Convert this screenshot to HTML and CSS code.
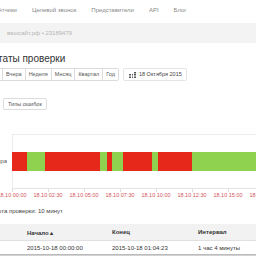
FILE: index.html
```html
<!DOCTYPE html>
<html lang="ru">
<head>
<meta charset="utf-8">
<link rel="stylesheet" href="styles.css">
</head>
<body>
<nav class="topnav">
  <a>Счётчики</a>
  <a>Целевой звонок</a>
  <a>Представители</a>
  <a>API</a>
  <a>Блог</a>
</nav>
<div class="band">вашсайт.рф • 23189479</div>
<h1 class="title">Результаты проверки</h1>
<div class="toolbar">
  <div class="group">
    <button class="btn">Сегодня</button>
    <button class="btn">Вчера</button>
    <button class="btn">Неделя</button>
    <button class="btn">Месяц</button>
    <button class="btn">Квартал</button>
    <button class="btn">Год</button>
  </div>
  <button class="btn date">
    <svg width="7" height="6" viewBox="0 0 7 6"><rect x="5" y="0" width="2" height="1.5" fill="#555"/><rect x="0" y="2" width="7" height="1.5" fill="#555"/><rect x="0" y="4.5" width="7" height="1.5" fill="#555"/><rect x="2" y="2" width="1" height="4" fill="#fff"/><rect x="4" y="2" width="1" height="4" fill="#fff"/></svg>
    18 Октября 2015
  </button>
</div>
<div class="filters">
  <button class="btn single">Типы ошибок</button>
</div>
<section class="chart">
  <div class="ylabel">Доступность сервера</div>
  <div class="plot">
    <div class="area">
      <div class="bar">
        <span class="seg red" style="width:15px"></span>
        <span class="seg green" style="width:18px"></span>
        <span class="seg red" style="width:55px"></span>
        <span class="seg green" style="width:7px"></span>
        <span class="seg red" style="width:5px"></span>
        <span class="seg green" style="width:11px"></span>
        <span class="seg red" style="width:29px"></span>
        <span class="seg green" style="width:6px"></span>
        <span class="seg red" style="width:34px"></span>
        <span class="seg green" style="width:80px"></span>
      </div>
    </div>
    <div class="ticks">
      <span></span><span></span><span></span><span></span><span></span><span></span><span></span>
    </div>
    <div class="labels">
      <span>18.10 00:00</span><span>18.10 02:30</span><span>18.10 05:00</span><span>18.10 07:30</span><span>18.10 10:00</span><span>18.10 12:30</span><span>18.10 15:00</span><span>18.10 17:30</span>
    </div>
  </div>
</section>
<p class="freq">Частота проверки: 10 минут</p>
<table class="table">
  <thead>
    <tr><th class="c0"></th><th class="c1">Начало ▴</th><th class="c2">Конец</th><th class="c3">Интервал</th></tr>
  </thead>
  <tbody>
    <tr><td class="c0"></td><td class="c1">2015-10-18 00:00:00</td><td class="c2">2015-10-18 01:04:23</td><td class="c3">1 час 4 минуты</td></tr>
  </tbody>
</table>
<div class="scrollbar"></div>
</body>
</html>
```
FILE: styles.css
```css
html, body {
  margin: 0;
  padding: 0;
  width: 256px;
  height: 256px;
  overflow: hidden;
  background: #fff;
  font-family: "Liberation Sans", Arial, sans-serif;
  color: #333;
}

.topnav {
  display: flex;
  gap: 15px;
  height: 23px;
  box-sizing: border-box;
  padding-top: 7px;
  margin-left: -9px;
  font-size: 6px;
  line-height: 7px;
  color: #888;
  white-space: nowrap;
}

.band {
  height: 20px;
  background: #f3f3f3;
  padding-left: 7px;
  font-size: 6px;
  line-height: 21px;
  color: #b5b5b5;
  white-space: nowrap;
}

.title {
  margin: 10px 0 0 -33px;
  font-size: 10px;
  line-height: 12px;
  font-weight: normal;
  color: #333;
  white-space: nowrap;
}

.toolbar {
  display: flex;
  gap: 4px;
  margin: 3px 0 0 -26px;
  height: 13px;
}

.group {
  display: flex;
}

.btn {
  font-family: "Liberation Sans", Arial, sans-serif;
  font-size: 5.5px;
  line-height: 11px;
  height: 13px;
  padding: 0 3px;
  margin: 0;
  border: 1px solid #dcdcdc;
  background: #fff;
  color: #555;
  white-space: nowrap;
  box-sizing: border-box;
}

.group .btn + .btn {
  margin-left: -1px;
}

.group .btn:first-child { border-radius: 2px 0 0 2px; }
.group .btn:last-child { border-radius: 0 2px 2px 0; }

.date {
  display: flex;
  align-items: center;
  gap: 3px;
  border-radius: 2px;
  border-color: #e4e4e4;
  padding: 0 4px 0 5px;
  color: #444;
}

.filters {
  margin: 11px 0 0 3px;
  height: 12px;
}

.single {
  height: 12px;
  line-height: 10px;
  border-radius: 2px;
  padding: 0 4px;
}

.chart {
  display: flex;
  margin-top: 30px;
}

.ylabel {
  width: 7px;
  font-size: 6px;
  line-height: 7px;
  direction: rtl;
  text-align: left;
  overflow: hidden;
  white-space: nowrap;
  color: #555;
  padding-top: 24px;
  margin-right: 5px;
  flex: none;
}

.plot {
  flex: 1;
  min-width: 0;
}

.area {
  height: 55px;
  box-sizing: border-box;
  border-top: 1px solid #ececec;
  border-left: 1px solid #ececec;
  border-bottom: 1px solid #e2e2e2;
  padding-top: 17px;
}

.bar {
  display: flex;
  height: 19px;
  margin-left: -1px;
}

.seg { display: block; flex: none; height: 100%; }
.red { background: #e5281a; }
.green { background: #8fd24f; }

.ticks {
  display: flex;
  height: 3px;
}

.ticks span {
  width: 36px;
  flex: none;
  border-left: 1px solid #ddd;
  box-sizing: border-box;
}

.labels {
  display: flex;
  margin-left: -18px;
  font-size: 5.5px;
  line-height: 7px;
  color: #d0545a;
  white-space: nowrap;
}

.labels span {
  width: 36px;
  flex: none;
  text-align: center;
}

.freq {
  margin: 9px 0 0 -15px;
  font-size: 6px;
  line-height: 7px;
  color: #444;
  white-space: nowrap;
}

.table {
  margin-top: 9px;
  border-collapse: collapse;
  width: 256px;
  table-layout: fixed;
  font-size: 6px;
  color: #333;
}

.table th {
  background: #f2f2f2;
  height: 16px;
  padding: 0;
  text-align: left;
  font-weight: bold;
  border-bottom: 1px solid #e0e0e0;
  white-space: nowrap;
}

.table td {
  height: 13px;
  padding: 0;
  white-space: nowrap;
  overflow: hidden;
}

.c0 { width: 27px; }
.c1 { width: 85px; }
.c2 { width: 86px; }
.c3 { width: 58px; }

.scrollbar {
  height: 6px;
  background: #d2d2d2;
  border-top: 1px solid #bbb;
}
```
